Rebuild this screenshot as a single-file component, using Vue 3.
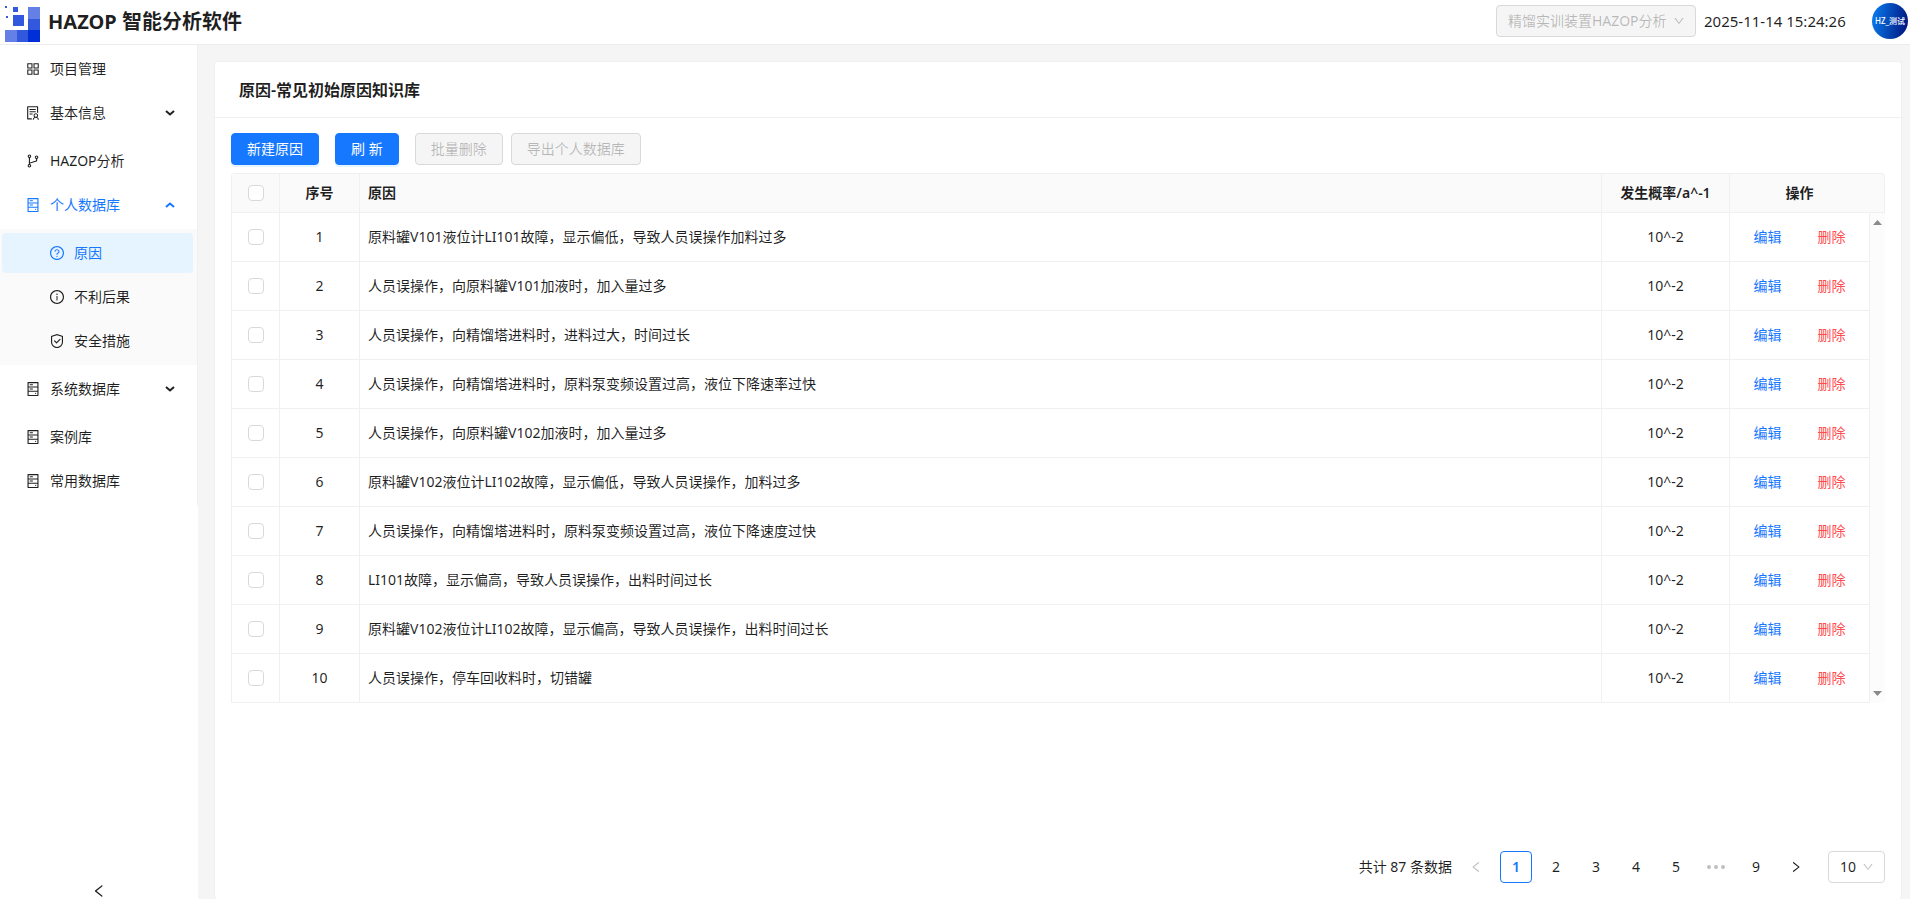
<template>
  <div class="layout">
    <!-- 顶部栏 -->
    <header class="header">
      <svg class="logo" viewBox="0 0 36 37" aria-hidden="true">
        <rect v-for="(b, i) in logoBlocks" :key="i" :x="b[0]" :y="b[1]" :width="b[2]" :height="b[3]" :fill="b[4]" />
      </svg>
      <h1 class="app-title">HAZOP 智能分析软件</h1>
      <div class="header-right">
        <div class="select project-select">
          <select v-model="project" aria-label="当前项目" disabled>
            <option>精馏实训装置HAZOP分析</option>
          </select>
          <svg class="select-arrow" viewBox="0 0 1024 1024" aria-hidden="true"><path :d="icons.down" /></svg>
        </div>
        <time class="clock">2025-11-14 15:24:26</time>
        <div class="avatar">HZ_测试</div>
      </div>
    </header>

    <div class="main">
      <!-- 侧边菜单 -->
      <aside class="sider">
        <nav>
          <ul class="menu">
            <li v-for="item in menu" :key="item.label" :class="{ submenu: item.expandable }">
              <a href="#" class="menu-item" :class="{ 'is-open': item.open }" @click.prevent>
                <svg class="icon" viewBox="0 0 1024 1024" aria-hidden="true"><path :d="icons[item.icon]" /></svg>
                <span>{{ item.label }}</span>
                <svg v-if="item.expandable" class="menu-arrow" viewBox="0 0 10 10" aria-hidden="true">
                  <path :d="item.open ? 'M1 7 5 3.5 9 7' : 'M1 3 5 6.5 9 3'" />
                </svg>
              </a>
              <ul v-if="item.children" class="menu-sub">
                <li v-for="child in item.children" :key="child.label">
                  <a
                    href="#"
                    class="menu-item menu-item-sub"
                    :class="{ 'is-active': child.label === activeMenu }"
                    @click.prevent="activeMenu = child.label"
                  >
                    <svg class="icon" viewBox="0 0 1024 1024" aria-hidden="true"><path :d="icons[child.icon]" /></svg>
                    <span>{{ child.label }}</span>
                  </a>
                </li>
              </ul>
            </li>
          </ul>
        </nav>
        <button class="collapse" type="button" aria-label="收起菜单">
          <svg class="icon" viewBox="0 0 1024 1024" aria-hidden="true"><path :d="icons.left" /></svg>
        </button>
      </aside>

      <!-- 内容区 -->
      <main class="content">
        <section class="card">
          <h2 class="card-head">原因-常见初始原因知识库</h2>
          <div class="card-body">
            <div class="toolbar">
              <button class="btn btn-primary" type="button">新建原因</button>
              <button class="btn btn-primary" type="button">刷 新</button>
              <div class="btn-group">
                <button class="btn" type="button" disabled>批量删除</button>
                <button class="btn" type="button" disabled>导出个人数据库</button>
              </div>
            </div>

            <div class="table-wrap">
              <table class="table table-head">
                <colgroup>
                  <col class="col-check" /><col class="col-index" /><col /><col class="col-rate" /><col class="col-action" /><col class="col-scroll" />
                </colgroup>
                <thead>
                  <tr>
                    <th><input v-model="allChecked" type="checkbox" class="checkbox" aria-label="全选" /></th>
                    <th>序号</th>
                    <th class="cell-left">原因</th>
                    <th>发生概率/a^-1</th>
                    <th class="no-line">操作</th>
                    <th></th>
                  </tr>
                </thead>
              </table>
              <div class="table-body">
                <table class="table">
                  <colgroup>
                    <col class="col-check" /><col class="col-index" /><col /><col class="col-rate" /><col class="col-action" />
                  </colgroup>
                  <tbody>
                    <tr v-for="(reason, i) in reasons" :key="i">
                      <td><input v-model="checked" type="checkbox" class="checkbox" :value="i" :aria-label="`选择第${i + 1}行`" /></td>
                      <td>{{ i + 1 }}</td>
                      <td class="cell-left">{{ reason }}</td>
                      <td>10^-2</td>
                      <td>
                        <div class="actions">
                          <a href="#" class="link" @click.prevent>编辑</a>
                          <a href="#" class="link link-danger" @click.prevent>删除</a>
                        </div>
                      </td>
                    </tr>
                  </tbody>
                </table>
                <div class="scroll-rail" aria-hidden="true">
                  <svg viewBox="0 0 9 5"><path d="M0 5 4.5 0 9 5z" /></svg>
                  <svg viewBox="0 0 9 5"><path d="M0 0 4.5 5 9 0z" /></svg>
                </div>
              </div>
            </div>

            <!-- 分页 -->
            <div class="pagination">
              <span class="total">共计 87 条数据</span>
              <button class="page" type="button" aria-label="上一页" disabled>
                <svg class="page-icon" viewBox="0 0 1024 1024" aria-hidden="true"><path :d="icons.left" /></svg>
              </button>
              <template v-for="p in pages" :key="p">
                <span v-if="p === '...'" class="page ellipsis">
                  <svg viewBox="0 0 18 4" aria-hidden="true">
                    <circle cx="2" cy="2" r="2" /><circle cx="9" cy="2" r="2" /><circle cx="16" cy="2" r="2" />
                  </svg>
                </span>
                <button v-else class="page" :class="{ 'is-current': p === page }" type="button" @click="page = p">{{ p }}</button>
              </template>
              <button class="page" type="button" aria-label="下一页">
                <svg class="page-icon flip" viewBox="0 0 1024 1024" aria-hidden="true"><path :d="icons.left" /></svg>
              </button>
              <div class="select size-select">
                <select v-model="pageSize" aria-label="每页条数">
                  <option>10</option>
                  <option>20</option>
                  <option>50</option>
                </select>
                <svg class="select-arrow" viewBox="0 0 1024 1024" aria-hidden="true"><path :d="icons.down" /></svg>
              </div>
            </div>
          </div>
        </section>
      </main>
    </div>
  </div>
</template>

<script setup>
import { ref, computed } from 'vue'

/** 图标路径 */
const circle = 'M512 64C264.6 64 64 264.6 64 512s200.6 448 448 448 448-200.6 448-448S759.4 64 512 64zm0 820c-205.4 0-372-166.6-372-372s166.6-372 372-372 372 166.6 372 372-166.6 372-372 372z'
const icons = {
  appstore: 'M464 144H160c-8.8 0-16 7.2-16 16v304c0 8.8 7.2 16 16 16h304c8.8 0 16-7.2 16-16V160c0-8.8-7.2-16-16-16zm-52 268H212V212h200v200zm452-268H560c-8.8 0-16 7.2-16 16v304c0 8.8 7.2 16 16 16h304c8.8 0 16-7.2 16-16V160c0-8.8-7.2-16-16-16zm-52 268H612V212h200v200zM464 544H160c-8.8 0-16 7.2-16 16v304c0 8.8 7.2 16 16 16h304c8.8 0 16-7.2 16-16V560c0-8.8-7.2-16-16-16zm-52 268H212V612h200v200zm452-268H560c-8.8 0-16 7.2-16 16v304c0 8.8 7.2 16 16 16h304c8.8 0 16-7.2 16-16V560c0-8.8-7.2-16-16-16zm-52 268H612V612h200v200z',
  solution: 'M688 264c0-4.4-3.6-8-8-8H296c-4.4 0-8 3.6-8 8v48c0 4.4 3.6 8 8 8h384c4.4 0 8-3.6 8-8v-48zm-8 136H296c-4.4 0-8 3.6-8 8v48c0 4.4 3.6 8 8 8h384c4.4 0 8-3.6 8-8v-48c0-4.4-3.6-8-8-8zM480 544H296c-4.4 0-8 3.6-8 8v48c0 4.4 3.6 8 8 8h184c4.4 0 8-3.6 8-8v-48c0-4.4-3.6-8-8-8zm-48 308H208V148h560v344c0 4.4 3.6 8 8 8h56c4.4 0 8-3.6 8-8V108c0-17.7-14.3-32-32-32H168c-17.7 0-32 14.3-32 32v784c0 17.7 14.3 32 32 32h264c4.4 0 8-3.6 8-8v-56c0-4.4-3.6-8-8-8zm356.8-74.4c29-26.3 47.2-64.3 47.2-106.6 0-79.5-64.5-144-144-144s-144 64.5-144 144c0 42.3 18.2 80.3 47.2 106.6-57 32.5-96.2 92.7-99.2 162.1-.2 4.5 3.5 8.3 8 8.3h48.1c4.2 0 7.7-3.3 8-7.6C564 871.2 621.7 816 692 816s128 55.2 131.9 124.4c.2 4.2 3.7 7.6 8 7.6H880c4.6 0 8.2-3.8 8-8.3-2.9-69.5-42.2-129.6-99.2-162.1zM692 591c44.2 0 80 35.8 80 80s-35.8 80-80 80-80-35.8-80-80 35.8-80 80-80z',
  branches: 'M740 161c-61.8 0-112 50.2-112 112 0 50.1 33.1 92.6 78.5 106.9v95.9L320 602.4V318.1c44.2-15 76-56.9 76-106.1 0-61.8-50.2-112-112-112s-112 50.2-112 112c0 49.2 31.8 91 76 106.1V706c-44.2 15-76 56.9-76 106.1 0 61.8 50.2 112 112 112s112-50.2 112-112c0-49.2-31.8-91-76-106.1v-27.8l423.5-138.7a50.52 50.52 0 0034.9-48.2V378.2c42.9-15.8 73.6-57 73.6-105.2 0-61.8-50.2-112-112-112zm-504 51a48.01 48.01 0 0196 0 48.01 48.01 0 01-96 0zm96 600a48.01 48.01 0 01-96 0 48.01 48.01 0 0196 0zm408-491a48.01 48.01 0 010-96 48.01 48.01 0 010 96z',
  hdd: 'M832 64H192c-17.7 0-32 14.3-32 32v832c0 17.7 14.3 32 32 32h640c17.7 0 32-14.3 32-32V96c0-17.7-14.3-32-32-32zm-600 72h560v208H232V136zm560 480H232V408h560v208zm0 272H232V680h560v208zM496 208H312c-4.4 0-8 3.6-8 8v48c0 4.4 3.6 8 8 8h184c4.4 0 8-3.6 8-8v-48c0-4.4-3.6-8-8-8zM312 544h184c4.4 0 8-3.6 8-8v-48c0-4.4-3.6-8-8-8H312c-4.4 0-8 3.6-8 8v48c0 4.4 3.6 8 8 8zm328 244a40 40 0 1080 0 40 40 0 10-80 0z',
  question: circle + 'M623.6 316.7C593.6 290.4 554 276 512 276s-81.6 14.5-111.6 40.7C369.2 344 352 380.7 352 420v7.6c0 4.4 3.6 8 8 8h48c4.4 0 8-3.6 8-8V420c0-44.1 43.1-80 96-80s96 35.9 96 80c0 31.1-22 59.6-56.1 72.7-21.2 8.1-39.2 22.3-52.1 40.9-13.1 19-19.9 41.8-19.9 64.9V620c0 4.4 3.6 8 8 8h48c4.4 0 8-3.6 8-8v-22.7a48.3 48.3 0 0130.9-44.8c59-22.7 97.1-74.7 97.1-132.5.1-39.3-17.1-76-48.3-103.3zM472 732a40 40 0 1080 0 40 40 0 10-80 0z',
  info: circle + 'M464 336a48 48 0 1096 0 48 48 0 10-96 0zm72 112h-48c-4.4 0-8 3.6-8 8v272c0 4.4 3.6 8 8 8h48c4.4 0 8-3.6 8-8V456c0-4.4-3.6-8-8-8z',
  safety: 'M512 64L128 192v384c0 212.1 171.9 384 384 384s384-171.9 384-384V192L512 64zm312 512c0 172.3-139.7 312-312 312S200 748.3 200 576V246l312-110 312 110v330zM378.4 475.1a35.91 35.91 0 00-50.9 0 35.91 35.91 0 000 50.9l129.4 129.4 2.1 2.1a33.98 33.98 0 0048.1 0L730.6 434a33.98 33.98 0 000-48.1l-2.8-2.8a33.98 33.98 0 00-48.1 0L483 579.7 378.4 475.1z',
  down: 'M884 256h-75c-5.1 0-9.9 2.5-12.9 6.6L512 654.2 227.9 262.6c-3-4.1-7.8-6.6-12.9-6.6h-75c-6.5 0-10.3 7.4-6.5 12.7l352.6 486.1c12.8 17.6 39 17.6 51.7 0l352.6-486.1c3.9-5.3.1-12.7-6.4-12.7z',
  left: 'M724 218.3V141c0-6.7-7.7-10.4-12.9-6.3L260.3 486.8a31.86 31.86 0 000 50.3l450.8 352.1c5.3 4.1 12.9.4 12.9-6.3v-77.3c0-4.9-2.3-9.6-6.1-12.6l-360-281 360-281.1c3.8-3 6.1-7.7 6.1-12.6z'
}

/** Logo 色块：x, y, 宽, 高, 颜色 */
const logoBlocks = [
  [0, 1, 2, 2, '#3158dd'],
  [8, 2, 5, 5, '#3158dd'],
  [1, 11, 2, 2, '#3158dd'],
  [8, 10, 11, 11, '#3158dd'],
  [23, 2, 12, 12, '#6480e6'],
  [23, 14, 12, 11, '#3158dd'],
  [23, 25, 12, 12, '#002fd8'],
  [0, 25, 12, 12, '#6480e6'],
  [12, 25, 11, 12, '#3158dd']
]

/** 侧边菜单 */
const menu = [
  { label: '项目管理', icon: 'appstore' },
  { label: '基本信息', icon: 'solution', expandable: true },
  { label: 'HAZOP分析', icon: 'branches' },
  {
    label: '个人数据库',
    icon: 'hdd',
    expandable: true,
    open: true,
    children: [
      { label: '原因', icon: 'question' },
      { label: '不利后果', icon: 'info' },
      { label: '安全措施', icon: 'safety' }
    ]
  },
  { label: '系统数据库', icon: 'hdd', expandable: true },
  { label: '案例库', icon: 'hdd' },
  { label: '常用数据库', icon: 'hdd' }
]
const activeMenu = ref('原因')

/** 表格数据 */
const reasons = [
  '原料罐V101液位计LI101故障，显示偏低，导致人员误操作加料过多',
  '人员误操作，向原料罐V101加液时，加入量过多',
  '人员误操作，向精馏塔进料时，进料过大，时间过长',
  '人员误操作，向精馏塔进料时，原料泵变频设置过高，液位下降速率过快',
  '人员误操作，向原料罐V102加液时，加入量过多',
  '原料罐V102液位计LI102故障，显示偏低，导致人员误操作，加料过多',
  '人员误操作，向精馏塔进料时，原料泵变频设置过高，液位下降速度过快',
  'LI101故障，显示偏高，导致人员误操作，出料时间过长',
  '原料罐V102液位计LI102故障，显示偏高，导致人员误操作，出料时间过长',
  '人员误操作，停车回收料时，切错罐'
]
const checked = ref([])

// 全选状态与行勾选联动
const allChecked = computed({
  get: () => checked.value.length === reasons.length,
  set: (val) => {
    checked.value = val ? reasons.map((_, i) => i) : []
  }
})

/** 顶部与分页状态 */
const project = ref('精馏实训装置HAZOP分析')
const pages = [1, 2, 3, 4, 5, '...', 9]
const page = ref(1)
const pageSize = ref('10')
</script>

<style>
body {
  margin: 0;
}
</style>

<style scoped>
.layout {
  display: flex;
  flex-direction: column;
  min-height: 100vh;
  background: #f5f5f5;
  color: rgba(0, 0, 0, 0.88);
  font-family: "Noto Sans", "Noto Sans CJK SC", sans-serif;
  font-size: 14px;
  line-height: 22px;
}

.layout * {
  box-sizing: border-box;
}

ul {
  margin: 0;
  padding: 0;
  list-style: none;
}

a {
  color: inherit;
  text-decoration: none;
}

button,
select {
  font: inherit;
  color: inherit;
}

svg {
  display: block;
  fill: currentColor;
}

/* 顶部栏 */
.header {
  display: flex;
  align-items: center;
  box-sizing: border-box;
  height: 45px;
  padding: 0 2px 0 5px;
  border-bottom: 1px solid #ececec;
  background: #fff;
}

.logo {
  width: 36px;
  height: 37px;
  margin-top: 3px;
}

.app-title {
  margin: 0 0 0 7px;
  font-size: 20px;
  font-weight: 700;
  line-height: 28px;
}

.header-right {
  display: flex;
  align-items: center;
  margin-left: auto;
  padding-bottom: 2px;
}

.clock {
  width: 160px;
  margin-left: 8px;
  font-size: 15px;
  white-space: nowrap;
}

.avatar {
  width: 36px;
  height: 36px;
  margin-left: 8px;
  border-radius: 50%;
  background: linear-gradient(100deg, #0a80f2, #00107a);
  color: #fff;
  font-size: 8px;
  font-weight: 500;
  line-height: 36px;
  text-align: center;
  white-space: nowrap;
}

/* 下拉框 */
.select {
  position: relative;
}

.select select {
  display: block;
  width: 100%;
  height: 32px;
  padding: 0 24px 0 11px;
  border: 1px solid #d9d9d9;
  border-radius: 4px;
  background: #fff;
  appearance: none;
  opacity: 1;
}

.select select:disabled {
  background: #f5f5f5;
  color: rgba(0, 0, 0, 0.25);
}

.select-arrow {
  position: absolute;
  top: 10px;
  right: 11px;
  width: 12px;
  height: 12px;
  color: rgba(0, 0, 0, 0.25);
  pointer-events: none;
}

.project-select {
  width: 200px;
}

.size-select {
  width: 57px;
  margin-left: 8px;
}

/* 侧边栏 */
.main {
  display: flex;
  flex: 1;
}

.sider {
  display: flex;
  flex-direction: column;
  justify-content: space-between;
  width: 198px;
  background: #fff;
}

.menu {
  display: flex;
  flex-direction: column;
  gap: 4px;
  padding: 4px 0;
  border-right: 1px solid #f0f0f0;
}

.menu-item {
  display: flex;
  align-items: center;
  gap: 9px;
  height: 40px;
  margin: 0 4px 0 2px;
  padding: 0 18px 0 23px;
  border-radius: 4px;
}

.submenu > .menu-item {
  margin-bottom: 4px;
}

.menu-item.is-open {
  color: #1677ff;
}

.menu-item.is-active {
  background: #e6f4ff;
  color: #1677ff;
}

.menu-sub {
  display: flex;
  flex-direction: column;
  gap: 4px;
  padding: 4px 0;
  background: #fafafa;
}

.menu-item-sub {
  padding-left: 47px;
}

.icon {
  width: 16px;
  height: 16px;
}

.menu-arrow {
  width: 10px;
  height: 10px;
  margin-left: auto;
  fill: none;
  stroke: currentColor;
  stroke-width: 2;
}

.collapse {
  display: flex;
  justify-content: center;
  padding: 0;
  border: 0;
  background: none;
}

/* 内容卡片 */
.content {
  display: flex;
  flex: 1;
  min-width: 0;
  padding: 16px 8px 0 16px;
}

.card {
  display: flex;
  flex: 1;
  flex-direction: column;
  min-width: 0;
  border: 1px solid #f0f0f0;
  border-bottom: 0;
  border-radius: 4px;
  background: #fff;
}

.card-head {
  margin: 0;
  padding: 16px 24px 15px;
  border-bottom: 1px solid #f0f0f0;
  font-size: 16px;
  font-weight: 600;
  line-height: 24px;
}

.card-body {
  display: flex;
  flex: 1;
  flex-direction: column;
  padding: 15px 16px 16px;
}

/* 工具栏 */
.toolbar {
  display: flex;
  gap: 16px;
  margin-bottom: 8px;
}

.btn-group {
  display: flex;
  gap: 8px;
}

.btn {
  height: 32px;
  padding: 0 15px;
  border: 1px solid #d9d9d9;
  border-radius: 4px;
  background: #fff;
}

.btn:disabled {
  background: #f5f5f5;
  color: rgba(0, 0, 0, 0.25);
}

.btn-primary {
  border-color: #1677ff;
  background: #1677ff;
  box-shadow: 0 2px 0 rgba(5, 145, 255, 0.1);
  color: #fff;
}

/* 表格 */
.table-wrap {
  border-top: 1px solid #f0f0f0;
  border-left: 1px solid #f0f0f0;
  border-radius: 4px 4px 0 0;
}

.table {
  width: 100%;
  border-spacing: 0;
  table-layout: fixed;
}

.col-check {
  width: 48px;
}

.col-index {
  width: 80px;
}

.col-rate {
  width: 128px;
}

.col-action {
  width: 140px;
}

.col-scroll {
  width: 15px;
}

.table th,
.table td {
  height: 49px;
  padding: 0 8px;
  border-right: 1px solid #f0f0f0;
  border-bottom: 1px solid #f0f0f0;
  text-align: center;
}

.table th {
  height: 39px;
  background: #fafafa;
  font-weight: 600;
}

.table th:last-child {
  padding: 0;
  border-top-right-radius: 4px;
}

.table .no-line {
  border-right-color: transparent;
}

.table .cell-left {
  text-align: left;
}

.table-body {
  display: flex;
}

.table-body .table {
  flex: 1;
  width: auto;
}

.scroll-rail {
  display: flex;
  flex-direction: column;
  align-items: center;
  justify-content: space-between;
  width: 15px;
  padding: 7px 0;
  background: #fcfcfc;
  color: #8b8b8b;
}

.scroll-rail svg {
  width: 9px;
  height: 5px;
}

.checkbox {
  display: block;
  width: 16px;
  height: 16px;
  margin: 0 auto;
  border: 1px solid #d9d9d9;
  border-radius: 4px;
  background: #fff;
  appearance: none;
}

.checkbox:checked {
  border-color: #1677ff;
  background: #1677ff;
}

.actions {
  display: flex;
  justify-content: center;
  gap: 36px;
}

.link {
  color: #1677ff;
}

.link-danger {
  color: #ff4d4f;
}

/* 分页 */
.pagination {
  display: flex;
  align-items: center;
  justify-content: flex-end;
  gap: 8px;
  margin-top: auto;
}

.page {
  display: flex;
  align-items: center;
  justify-content: center;
  width: 32px;
  height: 32px;
  padding: 0;
  border: 1px solid transparent;
  border-radius: 4px;
  background: none;
}

.page:disabled,
.ellipsis {
  color: rgba(0, 0, 0, 0.25);
}

.page.is-current {
  border-color: #1677ff;
  background: #fff;
  color: #1677ff;
  font-weight: 600;
}

.page-icon {
  width: 14px;
  height: 14px;
}

.flip {
  transform: rotate(180deg);
}

.ellipsis svg {
  width: 18px;
  height: 4px;
}
</style>
